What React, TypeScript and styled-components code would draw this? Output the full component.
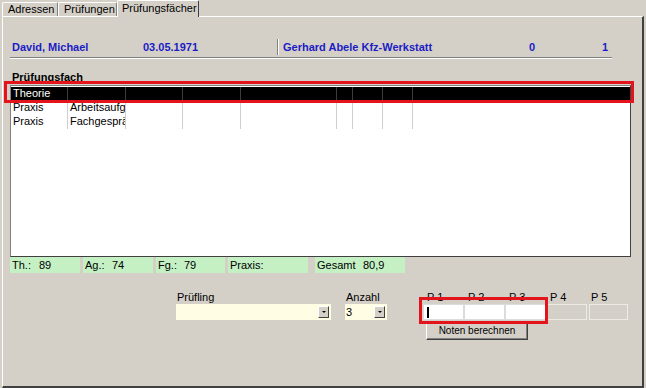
import React from "react";
import styled, { createGlobalStyle, css } from "styled-components";

const GlobalStyle = createGlobalStyle`
  html, body {
    margin: 0;
    padding: 0;
    background: #d4d0c8;
  }
  body {
    font-family: "Liberation Sans", Arial, sans-serif;
    font-size: 11px;
    color: #000;
  }
`;

const Window = styled.div`
  width: 646px;
  height: 388px;
  box-sizing: border-box;
  display: flex;
  flex-direction: column;
  padding: 0 2px 0 2px;
  background: #d4d0c8;
  overflow: hidden;
`;

const TabStrip = styled.div`
  display: flex;
  align-items: flex-end;
  height: 16px;
  position: relative;
  z-index: 1;
`;

const Tab = styled.div<{ $active?: boolean; $width: number }>`
  box-sizing: border-box;
  width: ${p => p.$width}px;
  height: 14px;
  padding: 0 0 0 5px;
  line-height: 13px;
  border-top: 1px solid #fff;
  border-left: 1px solid #fff;
  border-right: 1px solid #808080;
  border-top-left-radius: 2px;
  border-top-right-radius: 2px;
  background: #d4d0c8;
  white-space: nowrap;

  ${p => p.$active && css`
    height: 17px;
    margin-bottom: -1px;
    line-height: 15px;
    border-right: 1px solid #404040;
    padding-left: 4px;
  `}
`;

const Panel = styled.div`
  flex: 1;
  box-sizing: border-box;
  border-top: 1px solid #fff;
  border-left: 1px solid #fff;
  border-right: 2px solid #404040;
  border-bottom: 2px solid #404040;
  padding: 0 0 0 7px;
  display: flex;
  flex-direction: column;
`;

const HeaderRow = styled.div`
  display: flex;
  align-items: center;
  height: 18px;
  margin-top: 21px;
  color: #1c1cc4;
  font-weight: bold;
`;

const HeaderCell = styled.div<{ $width: number; $pad?: number }>`
  width: ${p => p.$width}px;
  padding-left: ${p => p.$pad ?? 0}px;
  box-sizing: border-box;
  white-space: nowrap;
`;

const HeaderDivider = styled.div`
  width: 1px;
  height: 16px;
  background: #808080;
  border-right: 1px solid #fff;
`;

const SunkenLine = styled.div<{ $width: number }>`
  width: ${p => p.$width}px;
  height: 0;
  border-top: 1px solid #808080;
  border-bottom: 1px solid #fff;
  margin-top: 1px;
`;

const SectionLabel = styled.div`
  font-weight: bold;
  margin: 11px 0 0 2px;
  height: 14px;
  line-height: 14px;
`;

const GridWrap = styled.div`
  position: relative;
  width: 621px;
  height: 172px;
  margin-top: 1px;
  box-sizing: border-box;
  border: 1px solid #808080;
  border-right-color: #404040;
  border-bottom-color: #404040;
  background: #fff;
  padding-top: 1px;
`;

const GridRow = styled.div<{ $selected?: boolean }>`
  display: flex;
  height: 14px;
  line-height: 13px;
  background: ${p => (p.$selected ? "#000" : "#fff")};
  color: ${p => (p.$selected ? "#fff" : "#000")};
`;

const GridCell = styled.div<{ $width?: number; $selected?: boolean }>`
  box-sizing: border-box;
  ${p => (p.$width ? `width: ${p.$width}px;` : "flex: 1;")}
  padding-left: 2px;
  overflow: hidden;
  white-space: nowrap;
  border-right: ${p => (p.$width ? `1px solid ${p.$selected ? "#3c3c3c" : "#cfcfcf"}` : "none")};
`;

const Highlight = styled.div<{ $left: number; $top: number; $width: number; $height: number }>`
  position: absolute;
  left: ${p => p.$left}px;
  top: ${p => p.$top}px;
  width: ${p => p.$width}px;
  height: ${p => p.$height}px;
  box-sizing: border-box;
  border: 3px solid #e4141c;
  pointer-events: none;
`;

const StatusRow = styled.div`
  display: flex;
  height: 16px;
`;

const StatusCell = styled.div<{ $width: number; $gap?: number }>`
  display: flex;
  align-items: center;
  width: ${p => p.$width}px;
  margin-right: ${p => p.$gap ?? 3}px;
  background: #c4f0c4;
  padding-left: 2px;
  box-sizing: border-box;
  white-space: nowrap;
`;

const StatusLabel = styled.span<{ $width?: number }>`
  display: inline-block;
  width: ${p => (p.$width ? `${p.$width}px` : "auto")};
`;

const FormRow = styled.div`
  display: flex;
  margin: 18px 0 0 166px;
`;

const FieldGroup = styled.div<{ $width: number; $gap: number }>`
  display: flex;
  flex-direction: column;
  width: ${p => p.$width}px;
  margin-right: ${p => p.$gap}px;
`;

const FieldLabel = styled.div<{ $width?: number }>`
  height: 12px;
  line-height: 12px;
  padding-left: 1px;
  margin-bottom: 1px;
  ${p => p.$width && `width: ${p.$width}px; padding-left: 4px; box-sizing: border-box;`}
`;

const Combo = styled.div`
  display: flex;
  align-items: center;
  justify-content: space-between;
  height: 16px;
  background: #fffde4;
  padding: 0 2px 0 1px;
  box-sizing: border-box;
`;

const DropButton = styled.div`
  width: 11px;
  height: 12px;
  box-sizing: border-box;
  background: #d4d0c8;
  border: 1px solid;
  border-color: #fff #404040 #404040 #fff;
  display: flex;
  align-items: center;
  justify-content: center;

  &::after {
    content: "";
    border-left: 2px solid transparent;
    border-right: 2px solid transparent;
    border-top: 2px solid #000;
  }
`;

const GradeGroup = styled.div`
  position: relative;
  display: flex;
  flex-direction: column;
`;

const GradeLine = styled.div`
  display: flex;
`;

const GradeBox = styled.div<{ $enabled?: boolean; $width?: number; $gap?: number }>`
  box-sizing: border-box;
  width: ${p => p.$width ?? 41}px;
  margin-left: ${p => p.$gap ?? 0}px;
  height: 16px;
  border: 1px solid ${p => (p.$enabled ? "#dcdcdc" : "#ecebe6")};
  background: ${p => (p.$enabled ? "#fff" : "#d4d0c8")};
  padding: 2px 0 0 3px;
`;

const Caret = styled.div`
  width: 2px;
  height: 11px;
  background: #000;
`;

const Button = styled.div`
  width: 102px;
  height: 19px;
  margin: 1px 0 0 3px;
  box-sizing: border-box;
  border: 1px solid;
  border-color: #fff #404040 #404040 #fff;
  box-shadow: inset -1px -1px 0 #808080;
  display: flex;
  align-items: center;
  justify-content: center;
  font-size: 10px;
`;

const columns = [57, 58, 57, 58, 96, 16, 30, 30];

const rows = [
  { cells: ["Theorie", ""], selected: true },
  { cells: ["Praxis", "Arbeitsaufgabe"] },
  { cells: ["Praxis", "Fachgespräch"] },
];

const grades = ["P 1", "P 2", "P 3", "P 4", "P 5"];

export default function App() {
  return (
    <>
      <GlobalStyle />
      <Window>
        <TabStrip>
          <Tab $width={56}>Adressen</Tab>
          <Tab $width={59}>Prüfungen</Tab>
          <Tab $width={82} $active>Prüfungsfächer</Tab>
        </TabStrip>
        <Panel>
          <HeaderRow>
            <HeaderCell $width={133} $pad={2}>David, Michael</HeaderCell>
            <HeaderCell $width={134}>03.05.1971</HeaderCell>
            <HeaderDivider />
            <HeaderCell $width={250} $pad={4}>Gerhard Abele Kfz-Werkstatt</HeaderCell>
            <HeaderCell $width={73}>0</HeaderCell>
            <HeaderCell $width={10}>1</HeaderCell>
          </HeaderRow>
          <SunkenLine $width={602} />
          <SectionLabel>Prüfungsfach</SectionLabel>
          <GridWrap>
            {rows.map((row, r) => (
              <GridRow key={r} $selected={row.selected}>
                {columns.map((w, c) => (
                  <GridCell key={c} $width={w} $selected={row.selected}>
                    {row.cells[c] ?? ""}
                  </GridCell>
                ))}
                <GridCell $selected={row.selected} />
              </GridRow>
            ))}
            <Highlight $left={-7} $top={-5} $width={630} $height={22} />
          </GridWrap>
          <StatusRow>
            <StatusCell $width={70}>
              <StatusLabel $width={27}>Th.:</StatusLabel>89
            </StatusCell>
            <StatusCell $width={70}>
              <StatusLabel $width={27}>Ag.:</StatusLabel>74
            </StatusCell>
            <StatusCell $width={69}>
              <StatusLabel $width={26}>Fg.:</StatusLabel>79
            </StatusCell>
            <StatusCell $width={80} $gap={7}>
              <StatusLabel>Praxis:</StatusLabel>
            </StatusCell>
            <StatusCell $width={90}>
              <StatusLabel $width={46}>Gesamt</StatusLabel>80,9
            </StatusCell>
          </StatusRow>
          <FormRow>
            <FieldGroup $width={155} $gap={14}>
              <FieldLabel>Prüfling</FieldLabel>
              <Combo>
                <span />
                <DropButton />
              </Combo>
            </FieldGroup>
            <FieldGroup $width={42} $gap={36}>
              <FieldLabel>Anzahl</FieldLabel>
              <Combo>
                <span>3</span>
                <DropButton />
              </Combo>
            </FieldGroup>
            <GradeGroup>
              <GradeLine>
                {grades.map((g, i) => (
                  <FieldLabel key={g} $width={i === 4 ? 43 : 41}>{g}</FieldLabel>
                ))}
              </GradeLine>
              <GradeLine>
                <GradeBox $enabled>
                  <Caret />
                </GradeBox>
                <GradeBox $enabled />
                <GradeBox $enabled />
                <GradeBox />
                <GradeBox $gap={2} $width={39} />
              </GradeLine>
              <Button>Noten berechnen</Button>
              <Highlight $left={-4} $top={6} $width={129} $height={27} />
            </GradeGroup>
          </FormRow>
        </Panel>
      </Window>
    </>
  );
}
